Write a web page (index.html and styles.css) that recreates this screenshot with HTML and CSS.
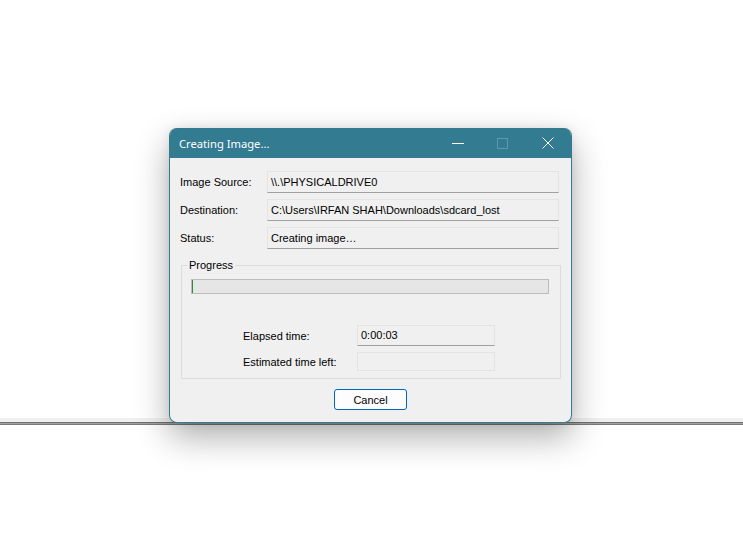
FILE: index.html
```html
<!DOCTYPE html>
<html lang="en">
<head>
    <meta charset="UTF-8" />
    <meta name="viewport" content="width=device-width, initial-scale=1.0" />
    <title>Creating Image...</title>
    <link rel="stylesheet" href="styles.css">
</head>
<body>
    <div class="dialog">
        <div class="titlebar">
            <span class="title">Creating Image...</span>
            <div class="controls">
                <span class="ctl">
                    <svg width="12" height="12" viewBox="0 0 12 12"><path d="M0 6.5h12" stroke="#fff" stroke-width="1"/></svg>
                </span>
                <span class="ctl">
                    <svg width="11" height="11" viewBox="0 0 11 11"><rect x="0.5" y="0.5" width="10" height="10" fill="none" stroke="#5d98ab" stroke-width="1"/></svg>
                </span>
                <span class="ctl">
                    <svg width="12" height="12" viewBox="0 0 12 12"><path d="M0.5 0.5l11 11M11.5 0.5l-11 11" stroke="#fff" stroke-width="1"/></svg>
                </span>
            </div>
        </div>

        <div class="body">
            <div class="info">
                <span class="label">Image Source:</span>
                <div class="field">\\.\PHYSICALDRIVE0</div>
                <span class="label">Destination:</span>
                <div class="field">C:\Users\IRFAN SHAH\Downloads\sdcard_lost</div>
                <span class="label">Status:</span>
                <div class="field">Creating image…</div>
            </div>

            <fieldset class="group">
                <legend>Progress</legend>
                <div class="progress"><div class="bar" style="width: 1px"></div></div>
                <div class="times">
                    <span class="label">Elapsed time:</span>
                    <div class="field">0:00:03</div>
                    <span class="label">Estimated time left:</span>
                    <div class="field empty"></div>
                </div>
            </fieldset>

            <div class="buttons">
                <button class="btn">Cancel</button>
            </div>
        </div>
    </div>
</body>
</html>
```

FILE: styles.css
```css
html {
    height: 100%;
}

body {
    margin: 0;
    height: 100%;
    font-family: Tahoma, "Liberation Sans", Arial, sans-serif;
    font-size: 11px;
    color: #000;
    /* parent window edge behind the dialog */
    background: linear-gradient(to bottom,
        #fff 0, #fff 418px,
        #f0f0f0 418px, #f0f0f0 422px,
        #707070 422px, #707070 423px,
        #a2a2a2 423px, #a2a2a2 424px,
        #7a7a7a 424px, #7a7a7a 425px,
        #fff 425px);
}

.dialog {
    width: 401px;
    margin: 128px auto 0;
    position: relative;
    left: -1px;
    background: #f0f0f0;
    border: 1px solid #337b91;
    border-top: none;
    border-radius: 8px;
    overflow: hidden;
    box-shadow: 0 14px 34px rgba(0, 0, 0, 0.32), 0 0 10px rgba(0, 0, 0, 0.08);
}

.titlebar {
    height: 30px;
    background: #337b91;
    display: flex;
    align-items: center;
    justify-content: space-between;
    margin: 0 -1px;
}

.title {
    padding-left: 10px;
    font-family: "Noto Sans", "Open Sans", sans-serif;
    font-size: 11.2px;
    color: #fff;
}

.controls {
    display: flex;
    height: 100%;
    padding-right: 2px;
}

.ctl {
    width: 45px;
    display: flex;
    align-items: center;
    justify-content: center;
}

.body {
    padding: 13px 12px 12px 10px;
}

.info {
    display: grid;
    grid-template-columns: 87px 1fr;
    row-gap: 6px;
    align-items: center;
}

.info .field {
    height: 20px;
    line-height: 20px;
}

.field {
    height: 19px;
    line-height: 19px;
    padding-left: 3px;
    background: #f0f0f0;
    border: 1px solid #e4e4e4;
    border-bottom-color: #a0a0a0;
    white-space: nowrap;
    overflow: hidden;
}

.field.empty {
    border-bottom-color: #e4e4e4;
    height: 17px;
}

.group {
    margin: 9px -2px 0 1px;
    padding: 7px 11px 7px 9px;
    border: 1px solid #dcdcdc;
}

.group legend {
    padding: 0 2px;
    margin-left: -4px;
    line-height: 14px;
}

.progress {
    height: 13px;
    background: #e6e6e6;
    border: 1px solid #bcbcbc;
}

.bar {
    height: 100%;
    background: #2c8a3c;
}

.times {
    display: grid;
    grid-template-columns: 114px 138px;
    row-gap: 6px;
    align-items: center;
    margin: 31px 0 0 52px;
}

.buttons {
    display: flex;
    justify-content: center;
    padding-top: 10px;
    margin-left: 2px;
}

.btn {
    width: 73px;
    height: 21px;
    font-family: inherit;
    font-size: 11px;
    color: #000;
    background: #fdfdfd;
    border: 1px solid #0067c0;
    border-radius: 3px;
    padding: 0;
}
```
